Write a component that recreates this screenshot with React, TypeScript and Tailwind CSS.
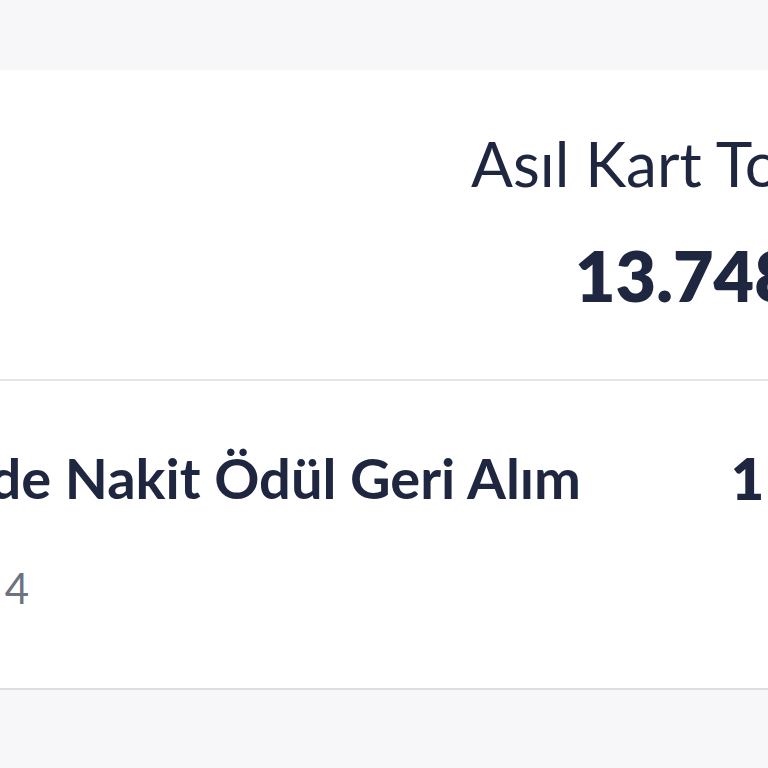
import React from "react";

const font = { fontFamily: "Lato, 'Noto Sans', sans-serif" };

export default function App() {
  return (
    <div className="w-[768px] h-[768px] overflow-hidden bg-[#f7f7f9] text-[#1f2640]" style={font}>
      <div className="h-[70px]" />
      <div className="bg-white">
        {/* total block */}
        <div className="h-[311px] border-b-2 border-[#e4e4ec] pt-[62px] pl-[471px]">
          <div className="whitespace-nowrap text-[62px] leading-none font-normal">
            Asıl Kart Toplam Borç
          </div>
          <div className="mt-[46px] pl-[104px] whitespace-nowrap text-[70px] leading-none font-extrabold">
            13.748,52 TL
          </div>
        </div>
        {/* transaction row */}
        <div className="h-[309px] border-b-2 border-[#dedede] pt-[69px] flex">
          <div className="w-[581px] shrink-0 flex flex-col items-end">
            <div className="whitespace-nowrap text-[56px] leading-none font-bold">
              Taksitli İşlemde Nakit Ödül Geri Alım
            </div>
            <div className="mt-[61px] w-[581px] flex">
              <div className="w-[29px] flex justify-end">
                <span className="whitespace-nowrap text-[42px] leading-none font-normal text-[#6b7280]">
                  Taksit Sayısı: 4
                </span>
              </div>
            </div>
          </div>
          <div className="pl-[150px] whitespace-nowrap text-[57px] leading-none font-extrabold tracking-[0.12em]">
            125,00 TL
          </div>
        </div>
      </div>
    </div>
  );
}
